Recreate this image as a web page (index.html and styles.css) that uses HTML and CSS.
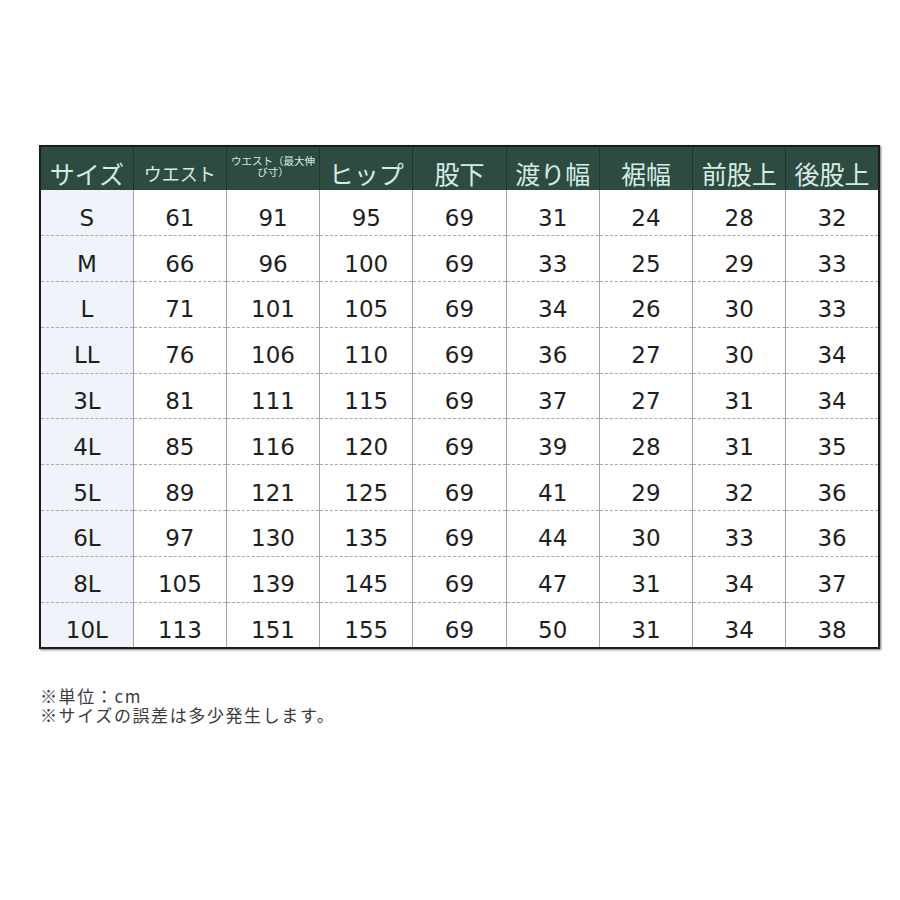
FILE: index.html
```html
<!DOCTYPE html>
<html lang="ja">
<head>
<meta charset="utf-8">
<title>サイズ表</title>
<link rel="stylesheet" href="styles.css">
</head>
<body>
<div class="page">
  <table class="size-table">
    <colgroup>
      <col><col><col><col><col><col><col><col><col>
    </colgroup>
    <thead>
      <tr>
        <th class="h-big">サイズ</th>
        <th class="h-mid">ウエスト</th>
        <th class="h-small"><span>ウエスト（最大伸</span><span>び寸）</span></th>
        <th class="h-big">ヒップ</th>
        <th class="h-big">股下</th>
        <th class="h-big">渡り幅</th>
        <th class="h-big">裾幅</th>
        <th class="h-big">前股上</th>
        <th class="h-big">後股上</th>
      </tr>
    </thead>
    <tbody>
      <tr><td class="size">S</td><td>61</td><td>91</td><td>95</td><td>69</td><td>31</td><td>24</td><td>28</td><td>32</td></tr>
      <tr><td class="size">M</td><td>66</td><td>96</td><td>100</td><td>69</td><td>33</td><td>25</td><td>29</td><td>33</td></tr>
      <tr><td class="size">L</td><td>71</td><td>101</td><td>105</td><td>69</td><td>34</td><td>26</td><td>30</td><td>33</td></tr>
      <tr><td class="size">LL</td><td>76</td><td>106</td><td>110</td><td>69</td><td>36</td><td>27</td><td>30</td><td>34</td></tr>
      <tr><td class="size">3L</td><td>81</td><td>111</td><td>115</td><td>69</td><td>37</td><td>27</td><td>31</td><td>34</td></tr>
      <tr><td class="size">4L</td><td>85</td><td>116</td><td>120</td><td>69</td><td>39</td><td>28</td><td>31</td><td>35</td></tr>
      <tr><td class="size">5L</td><td>89</td><td>121</td><td>125</td><td>69</td><td>41</td><td>29</td><td>32</td><td>36</td></tr>
      <tr><td class="size">6L</td><td>97</td><td>130</td><td>135</td><td>69</td><td>44</td><td>30</td><td>33</td><td>36</td></tr>
      <tr><td class="size">8L</td><td>105</td><td>139</td><td>145</td><td>69</td><td>47</td><td>31</td><td>34</td><td>37</td></tr>
      <tr><td class="size">10L</td><td>113</td><td>151</td><td>155</td><td>69</td><td>50</td><td>31</td><td>34</td><td>38</td></tr>
    </tbody>
  </table>
  <div class="notes">
    <p>※単位：cm</p>
    <p>※サイズの誤差は多少発生します。</p>
  </div>
</div>
</body>
</html>
```

FILE: styles.css
```css
html, body {
  margin: 0;
  padding: 0;
  background: #ffffff;
}

.page {
  padding: 145px 0 0 39px;
}

.size-table {
  border-collapse: collapse;
  table-layout: fixed;
  width: 841px;
  border: 2px solid #1c1c1c;
  box-shadow: 1px 1px 2px rgba(0, 0, 0, 0.55);
}

.size-table col {
  width: 93px;
}

.size-table th {
  height: 44px;
  padding: 9px 0 0 0;
  box-sizing: border-box;
  background: #2d4b41;
  color: #d6ece4;
  font-family: "Noto Sans CJK JP", sans-serif;
  font-weight: 400;
  text-align: center;
  vertical-align: middle;
  border-left: 1px solid #1f362e;
  white-space: nowrap;
  overflow: hidden;
}

.size-table th:first-child {
  border-left: none;
}

.h-big {
  font-size: 25px;
  line-height: 30px;
}

.h-mid {
  font-size: 18px;
  line-height: 24px;
}

.size-table th.h-small {
  font-size: 10.5px;
  line-height: 11px;
  padding-top: 0;
}

.h-small span {
  display: block;
}

.h-small span:first-child {
  margin-top: -6px;
}

.size-table td {
  height: 45.8px;
  padding: 10px 0 0 0;
  box-sizing: border-box;
  font-family: "DejaVu Sans", "Liberation Sans", sans-serif;
  font-size: 23px;
  line-height: 28px;
  color: #1e1e1e;
  text-align: center;
  vertical-align: middle;
  border-left: 1px solid #a3a3a3;
  border-bottom: 1px dashed #a9a9a9;
}

.size-table td.size {
  border-left: none;
  background: #f0f3f9;
}

.size-table tbody tr:last-child td {
  border-bottom: none;
}

.notes {
  margin-top: 37px;
  padding-left: 1px;
  font-family: "Noto Sans CJK JP", sans-serif;
  font-size: 17px;
  line-height: 19px;
  color: #3a3a3a;
  letter-spacing: 1.6px;
}

.notes p {
  margin: 0;
}
```
